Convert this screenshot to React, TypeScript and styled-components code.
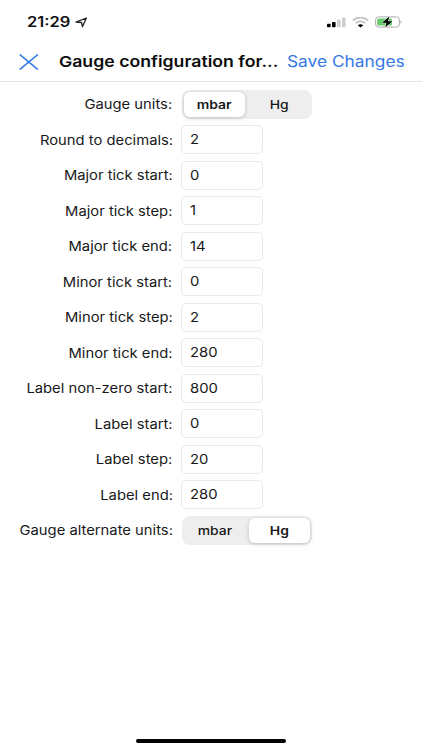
import React, { useState } from "react";
import styled, { createGlobalStyle } from "styled-components";

const GlobalStyle = createGlobalStyle`
  * { box-sizing: border-box; }
  body { margin: 0; background: #fff; }
  button { border: 0; padding: 0; background: none; font: inherit; color: inherit; }
`;

const Screen = styled.main`
  width: 422px;
  height: 750px;
  display: flex;
  flex-direction: column;
  background: #fff;
  color: #18181a;
  font-family: Inter, "Liberation Sans", sans-serif;
  overflow: hidden;
`;

const Wide = styled.span<{ $x: number; $origin?: string }>`
  display: inline-block;
  white-space: nowrap;
  transform: scaleX(${(p) => p.$x});
  transform-origin: ${(p) => p.$origin ?? "left"} center;
`;

const StatusBar = styled.div`
  height: 44px;
  padding: 0 20px 0 27px;
  display: flex;
  justify-content: space-between;
  align-items: center;
`;

const Clock = styled.div`
  display: flex;
  align-items: center;
  width: 60.5px;
  justify-content: space-between;
  font-size: 14px;
  font-weight: 600;
  line-height: 44px;
  color: #111;
`;

const StatusIcons = styled.div`
  display: flex;
  align-items: center;
  gap: 6px;
`;

const Header = styled.header`
  height: 38px;
  padding: 0 0 2px 19px;
  display: flex;
  align-items: center;
  border-bottom: 1px solid #e6e6e6;
  line-height: 34px;
`;

const CloseButton = styled.button`
  display: flex;
  width: 40px;
`;

const Title = styled.h1`
  margin: 0;
  width: 228px;
  font-size: 15.2px;
  font-weight: 600;
  color: #0b0b0c;
`;

const SaveButton = styled.button`
  font-size: 15.2px;
  color: #3478e5;
  text-align: left;
`;

const Form = styled.form`
  flex: 1;
  padding-top: 4.5px;
  display: flex;
  flex-direction: column;
`;

const Row = styled.div`
  height: 35.53px;
  display: grid;
  grid-template-columns: 172.6px 1fr;
  column-gap: 8.4px;
  align-items: center;
`;

const Label = styled.label`
  text-align: right;
  font-size: 13px;
  line-height: 20px;
`;

const Field = styled.div`
  width: 82px;
  height: 29px;
  padding-left: 8px;
  border: 1px solid #e8e8e9;
  border-radius: 5px;
  font-size: 13px;
  line-height: 27.5px;
`;

const Segments = styled.div`
  width: 130px;
  height: 28.5px;
  margin-left: 1px;
  padding: 2px;
  display: flex;
  justify-content: space-between;
  border-radius: 8px;
  background: #eeeeef;
`;

const Segment = styled.button<{ $active: boolean }>`
  width: 61px;
  border-radius: 6px;
  text-align: center;
  font-size: 12.1px;
  line-height: 25px;
  font-weight: ${(p) => (p.$active ? 600 : 500)};
  background: ${(p) => (p.$active ? "#fff" : "transparent")};
  box-shadow: ${(p) => (p.$active ? "0 1px 4px rgba(0,0,0,.2)" : "none")};
`;

const HomeBar = styled.div`
  width: 150px;
  height: 4px;
  margin: 0 auto 7.5px;
  border-radius: 2px;
  background: #000;
`;

const LocationArrow = () => (
  <svg width="13" height="11" viewBox="0 0 13 11" fill="none">
    <path d="M1 5.2 11.4 1 7.4 9.7 6.5 5.5Z" stroke="#222" strokeWidth="1.3" strokeLinejoin="round" />
  </svg>
);

const Signal = () => (
  <svg width="19" height="11" viewBox="0 0 19 11">
    <rect x="0" y="6.7" width="3.6" height="3.6" rx="0.8" fill="#000" />
    <rect x="5" y="5" width="3.6" height="5.3" rx="0.8" fill="#000" />
    <rect x="10" y="2.6" width="3.6" height="7.7" rx="0.8" fill="#cecece" />
    <rect x="15" y="0.4" width="3.6" height="9.9" rx="0.8" fill="#cecece" />
  </svg>
);

const Wifi = () => (
  <svg width="17" height="11" viewBox="0 0 17 11" fill="none">
    <path d="M.7 3.6C5-.4 12-.4 16.3 3.6M3.7 6.1c2.7-2.4 6.9-2.4 9.6 0" stroke="#c4c4c4" strokeWidth="1.7" />
    <path d="M8.5 10.6 5.8 8.3c1.5-1.3 3.9-1.3 5.4 0Z" fill="#000" />
  </svg>
);

const Battery = () => (
  <svg width="27" height="12" viewBox="0 0 27 12">
    <rect x="0.6" y="0.9" width="23.8" height="10.2" rx="3" fill="#fff" stroke="#aaa" strokeWidth="1" />
    <rect x="2.2" y="2.4" width="14.8" height="7.2" rx="1.5" fill="#66cb69" />
    <path d="M25.5 4.3v3.4c1.3-.5 1.3-2.9 0-3.4Z" fill="#aaa" />
    <path d="M14.3.4 7 6.7h4.4L10.2 11.5 17.4 5.2H13Z" fill="#000" stroke="#fff" strokeWidth="0.8" paintOrder="stroke" />
  </svg>
);

const UNITS = ["mbar", "Hg"];

const FIELDS = [
  ["Round to decimals:", "2"],
  ["Major tick start:", "0"],
  ["Major tick step:", "1"],
  ["Major tick end:", "14"],
  ["Minor tick start:", "0"],
  ["Minor tick step:", "2"],
  ["Minor tick end:", "280"],
  ["Label non-zero start:", "800"],
  ["Label start:", "0"],
  ["Label step:", "20"],
  ["Label end:", "280"],
];

function UnitRow({ label, initial }: { label: string; initial: string }) {
  const [unit, setUnit] = useState(initial);
  return (
    <Row>
      <Label><Wide $x={1.137} $origin="right">{label}</Wide></Label>
      <Segments>
        {UNITS.map((u) => (
          <Segment key={u} type="button" $active={u === unit} onClick={() => setUnit(u)}>
            <Wide $x={1.15} $origin="center">{u}</Wide>
          </Segment>
        ))}
      </Segments>
    </Row>
  );
}

export default function App() {
  return (
    <Screen>
      <GlobalStyle />
      <StatusBar>
        <Clock><Wide $x={1.18}>21:29</Wide><LocationArrow /></Clock>
        <StatusIcons><Signal /><Wifi /><Battery /></StatusIcons>
      </StatusBar>
      <Header>
        <CloseButton aria-label="Close">
          <svg width="20" height="16" viewBox="0 0 20 16" fill="none">
            <path d="M1.2.9 18.4 15.1M18.4.9 1.2 15.1" stroke="#3478e5" strokeWidth="1.5" strokeLinecap="round" />
          </svg>
        </CloseButton>
        <Title><Wide $x={1.163}>Gauge configuration for...</Wide></Title>
        <SaveButton><Wide $x={1.14}>Save Changes</Wide></SaveButton>
      </Header>
      <Form>
        <UnitRow label="Gauge units:" initial="mbar" />
        {FIELDS.map(([label, value]) => (
          <Row key={label}>
            <Label><Wide $x={1.137} $origin="right">{label}</Wide></Label>
            <Field><Wide $x={1.14}>{value}</Wide></Field>
          </Row>
        ))}
        <UnitRow label="Gauge alternate units:" initial="Hg" />
      </Form>
      <HomeBar />
    </Screen>
  );
}
